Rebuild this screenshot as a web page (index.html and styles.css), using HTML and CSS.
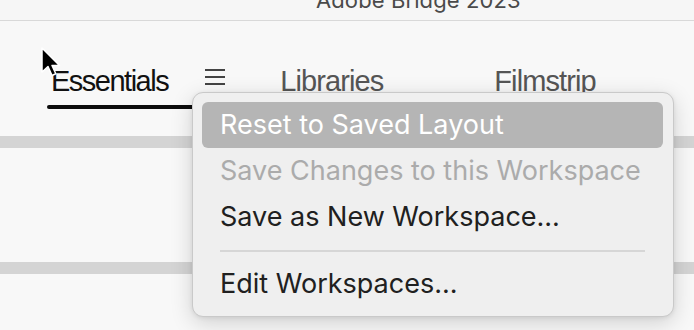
FILE: index.html
```html
<!DOCTYPE html>
<html lang="en">
<head>
    <meta charset="UTF-8">
    <meta name="viewport" content="width=device-width, initial-scale=1.0">
    <title>Adobe Bridge 2023</title>
    <link rel="stylesheet" href="styles.css">
</head>
<body>
    <div class="title-bar">
        <span class="app-title">Adobe Bridge 2023</span>
    </div>

    <div class="workspace-bar">
        <div class="tab tab-active">
            <span class="tab-label">Essentials</span>
            <svg class="tab-menu-icon" width="20" height="18" viewBox="0 0 20 18">
                <rect x="0" y="0" width="20" height="2" fill="#444"/>
                <rect x="0" y="7" width="20" height="2" fill="#444"/>
                <rect x="0" y="14" width="20" height="2" fill="#444"/>
            </svg>
        </div>
        <div class="tab tab-libraries">
            <span class="tab-label">Libraries</span>
        </div>
        <div class="tab tab-filmstrip">
            <span class="tab-label">Filmstrip</span>
        </div>
    </div>

    <div class="panel-divider"></div>
    <div class="panel"></div>
    <div class="panel-divider"></div>

    <!-- workspace dropdown, sits over the panels -->
    <ul class="workspace-menu">
        <li class="menu-item highlighted">Reset to Saved Layout</li>
        <li class="menu-item disabled">Save Changes to this Workspace</li>
        <li class="menu-item">Save as New Workspace...</li>
        <li class="menu-separator"></li>
        <li class="menu-item">Edit Workspaces...</li>
    </ul>

    <svg class="cursor" width="24" height="34" viewBox="0 0 24 34">
        <path d="M2 2 L2 26 L8 20.5 L12 29.5 L15.8 27.8 L12 19.5 L19.5 19.5 Z" fill="#000" stroke="#fff" stroke-width="1.5" stroke-linejoin="round"/>
    </svg>
</body>
</html>
```

FILE: styles.css
```css
* {
    margin: 0;
    padding: 0;
    box-sizing: border-box;
}

body {
    background-color: #f8f8f8;
    font-family: 'Liberation Sans', Arial, sans-serif;
    width: 694px;
    height: 330px;
    overflow: hidden;
    position: relative;
}

.title-bar {
    height: 21px;
    background-color: #f6f6f6;
    border-bottom: 1px solid #d9d9d9;
    overflow: hidden;
    padding-left: 316px;
}

.app-title {
    display: block;
    font-family: 'Inter', 'Liberation Sans', sans-serif;
    font-size: 22px;
    line-height: 26px;
    margin-top: -13px;
    color: #4a4a4a;
    letter-spacing: 0.1px;
}

.workspace-bar {
    display: flex;
    align-items: flex-start;
    padding-top: 44px;
    padding-left: 47px;
    height: 115px;
}

.tab {
    display: flex;
    align-items: center;
    position: relative;
    padding-bottom: 8px;
}

.tab-label {
    font-size: 29px;
    line-height: 32px;
    letter-spacing: -0.9px;
    color: #555;
}

.tab-active {
    padding-left: 4px;
    padding-right: 4px;
}

.tab-active .tab-label {
    color: #111;
    letter-spacing: -1.5px;
}

.tab-active::after {
    content: '';
    position: absolute;
    left: 0;
    right: 0;
    bottom: -4px;
    height: 4px;
    border-radius: 2px;
    background-color: #0c0c0c;
}

.tab-menu-icon {
    margin-left: 37px;
    margin-top: -6px;
}

.tab-libraries {
    margin-left: 51px;
}

.tab-filmstrip {
    margin-left: 111px;
}

.panel-divider {
    height: 12px;
    background-color: #d4d4d4;
}

.panel {
    height: 114px;
}

.workspace-menu {
    position: absolute;
    left: 192px;
    top: 92px;
    width: 482px;
    list-style: none;
    background-color: #efefef;
    border: 1px solid #c9c9c9;
    border-radius: 11px;
    padding: 9px 10px 9px 9px;
    box-shadow: 0 6px 22px rgba(0,0,0,0.16), 0 1px 4px rgba(0,0,0,0.08);
}

.menu-item {
    height: 46px;
    line-height: 46px;
    padding-left: 18px;
    font-family: 'Inter', 'Liberation Sans', sans-serif;
    font-size: 27px;
    color: #202020;
    border-radius: 6px;
    white-space: nowrap;
}

.menu-item.highlighted {
    background-color: #b5b5b5;
    color: #fff;
}

.menu-item.disabled {
    color: #ababab;
}

.menu-separator {
    height: 21px;
    margin: 0 18px;
    display: flex;
    align-items: center;
}

.menu-separator::before {
    content: '';
    flex: 1;
    height: 2px;
    background-color: #d6d6d6;
}

.cursor {
    position: absolute;
    left: 40px;
    top: 46px;
}
```
